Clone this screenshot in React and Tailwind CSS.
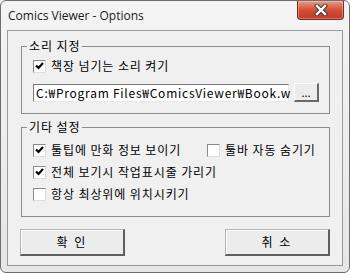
import React from 'react';

const font = { fontFamily: '"Noto Sans CJK KR", "Noto Sans", sans-serif' };

function CheckBox({ checked }) {
  return (
    <span className="relative flex h-[13px] w-[13px] shrink-0 items-center justify-center border border-t-[#8a8a8a] border-l-[#8a8a8a] border-b-[#dcdcdc] border-r-[#dcdcdc] bg-white">
      {checked && (
        <svg width="9" height="8" viewBox="0 0 9 8" className="block">
          <path d="M1 3.5 L3.5 6 L8 1" fill="none" stroke="#000" strokeWidth="2.2" />
        </svg>
      )}
    </span>
  );
}

function Option({ checked, label, className = '' }) {
  return (
    <div className={`flex h-[14px] items-center gap-[5px] ${className}`}>
      <CheckBox checked={checked} />
      <span className="whitespace-nowrap text-[12px] leading-[14px] tracking-[0.9px] text-black">{label}</span>
    </div>
  );
}

function Group({ title, children, className = '' }) {
  return (
    <fieldset className={`ml-[13px] w-[309px] border border-[#8c8c8c] pl-[11px] ${className}`}>
      <legend className="ml-[-6px] px-[2px] text-[12px] leading-[14px] tracking-[0.9px] text-black">{title}</legend>
      {children}
    </fieldset>
  );
}

function ClassicButton({ label, className = '' }) {
  return (
    <button className={`flex h-[27px] w-[105px] items-center justify-center border-t border-l border-t-[#b4b4b4] border-l-[#b4b4b4] border-b-2 border-r-2 border-b-[#5f5f5f] border-r-[#5f5f5f] bg-[#ececec] text-[12px] tracking-[2px] text-black shadow-[inset_1px_1px_0_#ffffff] ${className}`}>
      {label}
    </button>
  );
}

export default function App() {
  return (
    <div className="h-[274px] w-[350px] bg-white" style={font}>
      <div className="flex h-[273px] w-[350px] flex-col rounded-[6px] border border-[#6e6e6e] bg-gradient-to-b from-[#f4f4f4] to-[#e6e6e6]">
        {/* title bar */}
        <div className="flex h-[29px] items-start justify-between">
          <div
            className="ml-[7px] mt-[7px] text-[12px] leading-[16px] text-[#1a1a1a]"
            style={{ fontFamily: '"Open Sans", "Noto Sans", sans-serif' }}
          >
            Comics Viewer - Options
          </div>
          <div className="mr-[5px] flex h-[19px] w-[47px] items-center justify-center rounded-b-[4px] border border-t-0 border-[#7e2a1e] bg-gradient-to-b from-[#e89a86] via-[#d24e36] to-[#c23b24] shadow-[inset_0_0_0_1px_rgba(255,255,255,0.3)]">
            <svg width="14" height="12" viewBox="0 0 14 12">
              <path d="M3 2 L11 10 M11 2 L3 10" stroke="#3a3a3a" strokeWidth="4.4" strokeLinecap="square" />
              <path d="M3 2 L11 10 M11 2 L3 10" stroke="#ffffff" strokeWidth="2.4" strokeLinecap="square" />
            </svg>
          </div>
        </div>

        {/* client area */}
        <div className="mx-[6px] flex h-[236px] flex-col border border-[#9a9a9a] bg-[#f0f0f0]">
          <Group title="소리 지정" className="mt-[8px] pb-[11px]">
            <Option checked label="책장 넘기는 소리 켜기" className="mt-[6px]" />
            <div className="mt-[10px] flex items-center gap-[5px]">
              <div className="h-[18px] w-[256px] whitespace-nowrap border border-t-[#7a7a7a] border-l-[#7a7a7a] border-b-[#e8e8e8] border-r-[#e8e8e8] bg-white pl-[2px] text-[12px] leading-[16px] tracking-[0.75px] text-black">
                C:₩Program Files₩ComicsViewer₩Book.w
              </div>
              <button className="flex h-[19px] w-[25px] items-end justify-center border-t border-l border-t-[#ffffff] border-l-[#ffffff] border-b-2 border-r-2 border-b-[#6a6a6a] border-r-[#6a6a6a] bg-[#ececec] pb-[2px] text-[11px] leading-[12px] text-black">
                ...
              </button>
            </div>
          </Group>

          <Group title="기타 설정" className="mt-[6px] pb-[15px]">
            <div className="mt-[9px] flex">
              <Option checked label="툴팁에 만화 정보 보이기" className="w-[174px]" />
              <Option label="툴바 자동 숨기기" />
            </div>
            <Option checked label="전체 보기시 작업표시줄 가리기" className="mt-[8px]" />
            <Option label="항상 최상위에 위치시키기" className="mt-[8px]" />
          </Group>

          <div className="ml-[12px] mt-[12px] flex w-[310px] justify-between">
            <ClassicButton label="확 인" />
            <ClassicButton label="취 소" />
          </div>
        </div>
      </div>
    </div>
  );
}
